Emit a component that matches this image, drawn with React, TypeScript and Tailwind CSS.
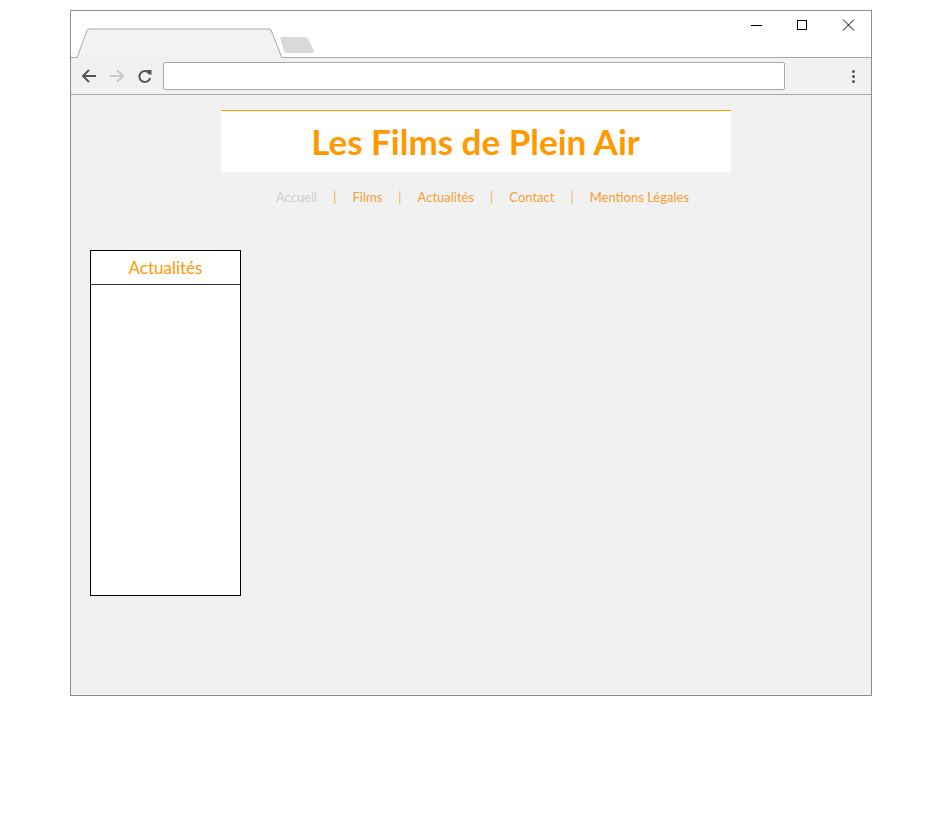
import React from "react";

const NAV = ["Accueil", "Films", "Actualités", "Contact", "Mentions Légales"];

function TabStrip() {
  return (
    <svg width="800" height="47" className="block">
      <path d="M6 47 L16 19 Q17 18 19 18 L197 18 Q199 18 200 19 L211 47" fill="#f2f2f2" stroke="#a9a9a9" strokeWidth="1" />
      <path d="M209 26 L234 26 Q236 26 237 28 L243 40 Q243 42 241 42 L216 42 Q214 42 213 40 Z" fill="#d9d9d9" />
      <path d="M0 46.5 L6 46.5 M211 46.5 L800 46.5" stroke="#a9a9a9" strokeWidth="1" />
      <path d="M680 14.5 L691 14.5" stroke="#000" strokeWidth="1" />
      <rect x="726.5" y="9.5" width="9" height="9" fill="none" stroke="#000" strokeWidth="1" />
      <path d="M772 8.5 L783 19.5 M783 8.5 L772 19.5" stroke="#000" strokeWidth="1" />
    </svg>
  );
}

function Toolbar() {
  return (
    <div className="flex h-[37px] items-center border-b border-[#a9a9a9] bg-[#f1f1f1]">
      <svg width="16" height="16" viewBox="0 0 16 16" className="ml-[10px]">
        <path d="M15 8 H2 M8 2 L2 8 L8 14" fill="none" stroke="#555" strokeWidth="2" />
      </svg>
      <svg width="16" height="16" viewBox="0 0 16 16" className="ml-[12px]">
        <path d="M1 8 H14 M8 2 L14 8 L8 14" fill="none" stroke="#c8c8c8" strokeWidth="2" />
      </svg>
      <svg width="16" height="16" viewBox="0 0 16 16" className="ml-[12px]">
        <path d="M13 6.5 A5.5 5.5 0 1 0 13.2 10" fill="none" stroke="#555" strokeWidth="2" />
        <path d="M9.5 2 L14.5 2 L14.5 7 Z" fill="#555" />
      </svg>
      <div className="ml-[10px] h-[28px] w-[622px] rounded-[2px] border border-[#a9a9a9] bg-white" />
      <div className="ml-[67px] flex flex-col gap-[2px]">
        <span className="block h-[3px] w-[3px] rounded-full bg-[#555]" />
        <span className="block h-[3px] w-[3px] rounded-full bg-[#555]" />
        <span className="block h-[3px] w-[3px] rounded-full bg-[#555]" />
      </div>
    </div>
  );
}

export default function App() {
  return (
    <div className="h-[816px] w-[932px] bg-white pl-[70px] pt-[10px] font-['Lato','Liberation_Sans',sans-serif]">
      <div className="flex h-[686px] w-[802px] flex-col border border-[#8c8c8c] bg-white">
        <TabStrip />
        <Toolbar />
        <main className="flex-1 bg-[#f1f1f1] px-[19px] pt-[15px]">
          <div className="ml-[9px] flex flex-col items-center">
            <header className="flex h-[62px] w-[510px] items-center justify-center border-t border-[#ff9900] bg-white">
              <h1 className="-mt-[1px] text-[35px] font-bold leading-none text-[#ff9900]">Les Films de Plein Air</h1>
            </header>
            <nav className="ml-[14px] mt-[19px] flex items-center gap-[16px] text-[13px] leading-none">
              {NAV.map((item, i) => (
                <React.Fragment key={item}>
                  {i > 0 && <span className="text-[#f9b24a]">|</span>}
                  <a className={i === 0 ? "text-[#cfcfcf]" : "text-[#f5a030]"}>{item}</a>
                </React.Fragment>
              ))}
            </nav>
          </div>
          <aside className="mt-[46px] h-[346px] w-[151px] border border-black bg-white">
            <div className="flex h-[34px] items-center justify-center border-b border-[#333] text-[17px] text-[#ff9900]">
              Actualités
            </div>
          </aside>
        </main>
      </div>
    </div>
  );
}
